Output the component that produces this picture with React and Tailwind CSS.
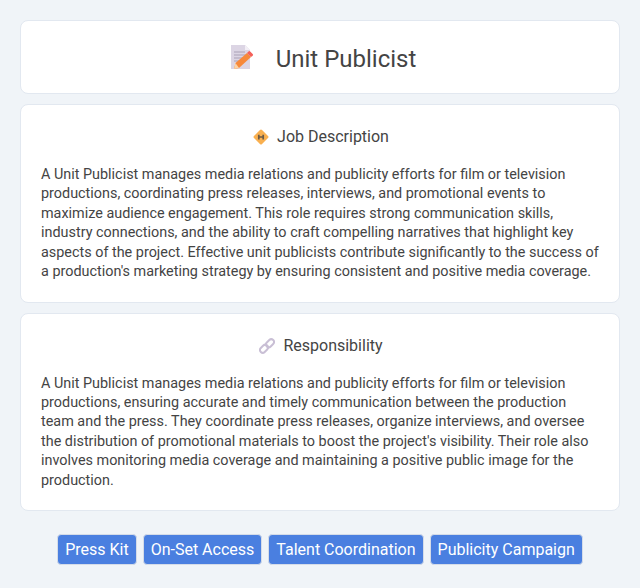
const TAGS = ['Press Kit', 'On-Set Access', 'Talent Coordination', 'Publicity Campaign'];

function MemoIcon() {
  return (
    <svg width="24" height="24" viewBox="0 0 24 24" className="shrink-0">
      <path d="M1 0h14l5 5v19H1z" fill="#dcd5e4" />
      <path d="M15 0l5 5h-5z" fill="#f3eff6" />
      <path d="M4 7h11M4 10h13M4 13h10M4 16h6" stroke="#aaa1b6" strokeWidth="1" />
      <path d="M4 24l1.500-6L17 8l4 4L9 23z" fill="#f7893b" />
      <path d="M17 8l1.500-1.500a1.200 1.200 0 0 1 1.700 0l2.500 2.500a1.200 1.200 0 0 1 0 1.700L21 12z" fill="#f4605a" />
      <path d="M4 24l1.500-6 3.500 5z" fill="#fbd3a8" />
    </svg>
  );
}

function DiamondIcon() {
  return (
    <svg width="16" height="16" viewBox="0 0 16 16" className="shrink-0">
      <rect x="2.300" y="2.300" width="11.400" height="11.400" rx="1.500" transform="rotate(45 8 8)" fill="#f9b050" />
      <path d="M5.800 5.800v4.600M10.200 5.800v4.600M5.800 8h4.400" stroke="#6b5a45" strokeWidth="1.700" />
    </svg>
  );
}

function LinkIcon() {
  return (
    <svg width="16" height="16" viewBox="0 0 16 16" fill="none" className="shrink-0" stroke="#c9bfd5" strokeWidth="2">
      <rect x="0.500" y="8" width="9" height="5.500" rx="2.750" transform="rotate(-45 5 10.750)" />
      <rect x="6.500" y="2.500" width="9" height="5.500" rx="2.750" transform="rotate(-45 11 5.250)" />
    </svg>
  );
}

function Section({ icon, title, children }) {
  return (
    <section className="bg-white border border-[#e2e8f0] rounded-lg px-5 pt-[21px] pb-[20.400px]">
      <h2 className="flex items-center justify-center gap-2 pl-0.5 text-base leading-[22px] text-[#444] mb-[16.900px]">
        {icon}
        {title}
      </h2>
      <p className="text-[14.400px] leading-[19.400px] text-[#444]">{children}</p>
    </section>
  );
}

export default function App() {
  return (
    <div className="min-h-[588px] bg-[#f0f4f8] p-5 flex flex-col gap-2.5 font-['Roboto',sans-serif]">
      <header className="bg-white border border-[#e2e8f0] rounded-lg h-[74px] flex items-center justify-center gap-[22px] pl-[6px]">
        <MemoIcon />
        <h1 className="text-2xl text-[#444] pt-[3px]">Unit Publicist</h1>
      </header>

      <Section icon={<DiamondIcon />} title="Job Description">
        A Unit Publicist manages media relations and publicity efforts for film or television productions, coordinating press releases, interviews, and promotional events to maximize audience engagement. This role requires strong communication skills, industry connections, and the ability to craft compelling narratives that highlight key aspects of the project. Effective unit publicists contribute significantly to the success of a production's marketing strategy by ensuring consistent and positive media coverage.
      </Section>

      <Section icon={<LinkIcon />} title="Responsibility">
        A Unit Publicist manages media relations and publicity efforts for film or television productions, ensuring accurate and timely communication between the production team and the press. They coordinate press releases, organize interviews, and oversee the distribution of promotional materials to boost the project's visibility. Their role also involves monitoring media coverage and maintaining a positive public image for the production.
      </Section>

      <div className="flex justify-center gap-[6px] mt-[12.600px]">
        {TAGS.map((tag) => (
          <span key={tag} className="bg-[#4a7fe0] border border-[#d5dce8] rounded text-white text-base pt-px leading-[27.500px] px-[7px]">
            {tag}
          </span>
        ))}
      </div>
    </div>
  );
}
